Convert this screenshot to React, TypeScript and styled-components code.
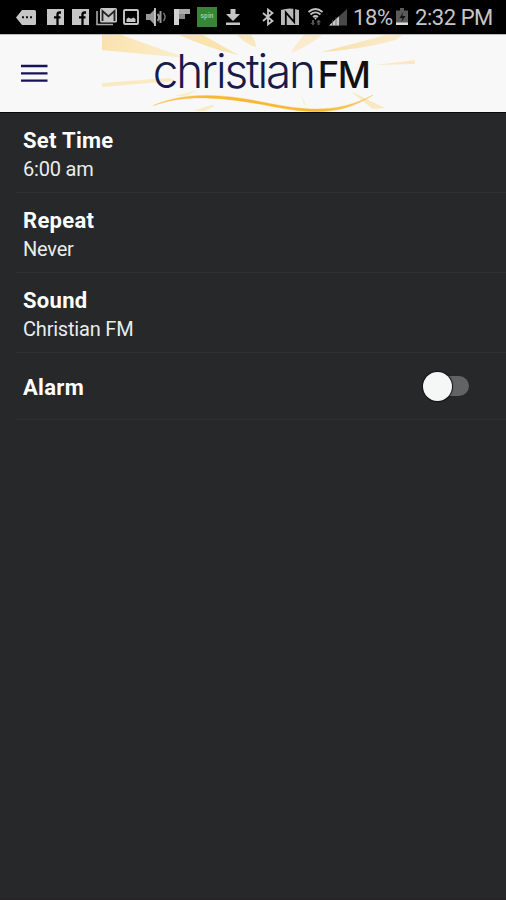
import React from 'react';
import styled, { createGlobalStyle } from 'styled-components';

const GlobalStyle = createGlobalStyle`
  * { box-sizing: border-box; }
  body { margin: 0; background: #262829; font-family: Roboto, "Liberation Sans", sans-serif; }
`;

const Screen = styled.main`
  display: flex;
  flex-direction: column;
  width: 506px;
  height: 900px;
  overflow: hidden;
  background: #262829;
  border-bottom: 2px solid #2a2226;
`;

const StatusBar = styled.div`
  display: flex;
  align-items: center;
  height: 34px;
  flex: none;
  padding-left: 16px;
  background: #000;
  color: #c6c6c6;
`;

const Glyph = styled.svg<{ $w: number; $before?: number }>`
  display: block;
  flex: none;
  width: ${(p) => p.$w}px;
  height: 34px;
  margin-left: ${(p) => p.$before ?? 0}px;
  overflow: visible;
`;

const StatusText = styled.span<{ $w: number; $before: number; $spacing: number }>`
  flex: none;
  width: ${(p) => p.$w}px;
  margin-left: ${(p) => p.$before}px;
  padding-top: 2px;
  font-size: 22px;
  line-height: 32px;
  letter-spacing: ${(p) => p.$spacing}px;
  white-space: nowrap;
`;

const Header = styled.header`
  display: flex;
  height: 79px;
  flex: none;
  background: #f8f8f8;
  border-top: 1px solid #b9b9b9;
  border-bottom: 1px solid #08090a;
`;

const MenuButton = styled.button`
  display: flex;
  align-items: center;
  width: 102px;
  padding: 0 0 0 21px;
  border: 0;
  background: none;
`;

const MenuIcon = styled.svg`
  display: block;
  width: 27px;
  height: 19px;
`;

const Logo = styled.svg`
  display: block;
  width: 320px;
  height: 77px;
`;

const Settings = styled.section`
  margin-left: 15px;
`;

const Row = styled.div<{ $height: number }>`
  display: flex;
  align-items: center;
  justify-content: space-between;
  height: ${(p) => p.$height}px;
  padding: 0 37px 0 8px;
  border-bottom: 1px solid #2f3133;
`;

const Labels = styled.div`
  display: flex;
  flex-direction: column;
  padding-top: 4px;
`;

const Title = styled.div`
  font-size: 22px;
  font-weight: 700;
  line-height: 28px;
  letter-spacing: 0.3px;
  color: #fff;
`;

const AlarmTitle = styled(Title)`
  padding-top: 4px;
`;

const Value = styled.div`
  font-size: 20px;
  line-height: 28px;
  letter-spacing: -0.2px;
  color: #ececec;
`;

const Toggle = styled.button`
  display: flex;
  align-items: center;
  width: 46px;
  height: 30px;
  padding: 0;
  border: 0;
  background: none;
`;

const Thumb = styled.span`
  width: 29px;
  height: 29px;
  flex: none;
  border-radius: 50%;
  background: #f5f6f6;
  box-shadow: 0 0 1px 1px #111213;
  z-index: 1;
`;

const Track = styled.span`
  width: 31px;
  height: 20px;
  margin-left: -14px;
  flex: none;
  border-radius: 10px;
  background: #626364;
`;

const Facebook = ({ before }: { before: number }) => (
  <Glyph $w={17} $before={before} viewBox="0 0 17 34">
    <rect y="9" width="17" height="16" fill="#c6c6c6" />
    <path d="M14 12.5h-1.5q-2 0-2 2V25M7 17.4h6.5" fill="none" stroke="#000" strokeWidth="2.3" />
  </Glyph>
);

const LeftIcons = () => (
  <>
    <Glyph $w={20} viewBox="0 0 20 34">
      <path d="M6 10h12.5q1.5 0 1.5 1.5v12q0 1.5-1.5 1.5H6L0 17.5z" fill="#c6c6c6" />
      <path d="M6 16.2h2v2H6zm4 0h2v2h-2zm4 0h2v2h-2z" fill="#111" />
    </Glyph>
    <Facebook before={11} />
    <Facebook before={8} />
    <Glyph $w={21} $before={7} viewBox="0 0 21 34">
      <path d="M1 11v13.5h16" fill="none" stroke="#aaa" strokeWidth="1.6" />
      <rect x="4" y="8" width="17" height="14.5" rx="1.5" fill="#c6c6c6" />
      <path d="M6.500 21V11l6 5.400 6-5.400v10" fill="none" stroke="#222" strokeWidth="1.8" />
    </Glyph>
    <Glyph $w={16} $before={6} viewBox="0 0 16 34">
      <rect x="1" y="10" width="14" height="14" rx="1" fill="none" stroke="#c6c6c6" strokeWidth="1.9" />
      <path d="M3.500 22v-3l2-1.500 2.500 1.200 2.500-1.200 2 1.500v3z" fill="#c6c6c6" />
    </Glyph>
    <Glyph $w={21} $before={7} viewBox="0 0 21 34">
      <path d="M0 14h4l5-5v16l-5-5H0z" fill="#999" />
      <path d="M9 8v18" stroke="#ccc" strokeWidth="1.8" />
      <path d="M11.500 14q3 3.500 0 7M14.500 11v12" fill="none" stroke="#999" strokeWidth="2" />
      <path d="M17.500 13q3 4 0 8" fill="none" stroke="#777" strokeWidth="1.4" />
    </Glyph>
    <Glyph $w={16} $before={7} viewBox="0 0 16 34">
      <path d="M0 9h5v16H0z" fill="#d2d2d2" />
      <path d="M5 9h11v5H5z" fill="#aaa" />
      <path d="M5 14h6v5H5z" fill="#888" />
    </Glyph>
    <Glyph $w={20} $before={7} viewBox="0 0 20 34">
      <rect y="7" width="20" height="20" fill="#398537" />
      <text x="3.500" y="18" fontFamily="Roboto, sans-serif" fontWeight="700" fontSize="6.5" textLength="13" fill="#9dcc98">spin</text>
    </Glyph>
    <Glyph $w={14} $before={9} viewBox="0 0 14 34">
      <path d="M4.500 9h5v5H14l-7 7-7-7h4.500zM0 22.500h14V25H0z" fill="#c6c6c6" />
    </Glyph>
  </>
);

const RightIcons = () => (
  <>
    <Glyph $w={12} $before={22} viewBox="0 0 12 34">
      <path d="M1 13l9.500 8L6 24.500v-15l4.500 3.500L1 21" fill="none" stroke="#c6c6c6" strokeWidth="1.8" />
    </Glyph>
    <Glyph $w={18} $before={7} viewBox="0 0 18 34">
      <path d="M0 10q9-3 18 0v15q-9 0-18 0z" fill="#b9b9b9" />
      <path d="M4.800 25V12.500l8.400 9.500V9" fill="none" stroke="#000" strokeWidth="1.8" />
    </Glyph>
    <Glyph $w={15} $before={9} viewBox="0 0 15 34">
      <path d="M.5 12q7-6 14 0M2.500 14.500q5-4.300 10 0M5 17q2.500-2 5 0" fill="none" stroke="#c0c0c0" strokeWidth="1.8" />
      <path d="M6 17.500h3l-1.500 2.500z" fill="#ccc" />
      <path d="M4 20v3H2.500l2.500 2.500L7 23H6v-3zM9.500 25v-2.800H8.100l2.500-2.600 2.500 2.600h-1.500V25z" fill="#555" />
    </Glyph>
    <Glyph $w={19} $before={6} viewBox="0 0 19 34">
      <path d="M0 25.500L18 9v16.500z" fill="#484848" />
      <path d="M0 25.500L10 16.300v9.200z" fill="#c8c8c8" />
      <path d="M3.500 20v6M7 17v9" stroke="#555" strokeWidth=".7" />
    </Glyph>
    <StatusText $w={39} $before={5} $spacing={-0.4}>18%</StatusText>
    <Glyph $w={12} $before={4} viewBox="0 0 12 34">
      <path d="M4 8h4v2.500h4V25H0V10.500h4z" fill="#5b5b5b" />
      <path d="M7.400 12L3.500 18h3l-1 4 4-6H6.300z" fill="#111" />
      <path d="M0 22.500h12V25H0z" fill="#ddd" />
    </Glyph>
    <StatusText $w={80} $before={7} $spacing={-0.45}>2:32 PM</StatusText>
  </>
);

const StationLogo = () => (
  <Logo viewBox="102 35 320 77" role="img" aria-label="Christian FM">
    <defs>
      <linearGradient id="rayLeft" x1="0" x2="1">
        <stop offset="0" stopColor="#fae2ad" />
        <stop offset="1" stopColor="#fbefcf" />
      </linearGradient>
      <linearGradient id="rayRight" x1="0" x2="1">
        <stop offset="0" stopColor="#f9e0a8" />
        <stop offset="1" stopColor="#fbecd0" />
      </linearGradient>
      <linearGradient id="swoosh" x1="0" x2="1">
        <stop offset="0" stopColor="#f8cb72" />
        <stop offset=".25" stopColor="#f8b72d" />
        <stop offset=".75" stopColor="#f7b928" />
        <stop offset="1" stopColor="#f5cf7c" />
      </linearGradient>
    </defs>
    <path d="M102 35h20q34 13 66 23-45-4-86-8z" fill="url(#rayLeft)" />
    <path d="M179 35h24q18 10 35 20-30-7-59-20z" fill="#f9e4b0" />
    <path d="M237 35h14q5 6 5 12-9-2-19-12z" fill="#f9e7bd" />
    <path d="M304 35h18q-13 11-31 18 5-10 13-18z" fill="#fbecd0" />
    <path d="M386 35h17l-7 5q-38 10-75 12 32-8 65-17z" fill="url(#rayRight)" />
    <path d="M375 65l40-5v4z" fill="#fbe7c4" />
    <path d="M102 83l66-5q5 1 5 3l-71 6z" fill="#faeac4" />
    <path d="M174 96l24-6-12 6z" fill="#faedc9" />
    <path d="M193 111l18-6 4 1-10 5z" fill="#faebc6" />
    <path d="M301 94l5 11h-2z" fill="#faeed5" />
    <path d="M350 91l35 17-12 1z" fill="#f9e8c2" />
    <path d="M153.500 105.500C188 90 230 95 267 103C311 112 341 112 373 95C338 118 304 113 264 104.800C218 97 186 94 153.500 105.500z" fill="url(#swoosh)" stroke="#f8be48" strokeWidth=".4" />
    <text x="152.800" y="88" fontFamily="Inter, sans-serif" fontWeight="300" fontSize="46.500" letterSpacing="-2.200" textLength="161" lengthAdjust="spacingAndGlyphs" fill="#171b4b">christian</text>
    <text x="317.800" y="87.500" fontFamily="Inter, sans-serif" fontWeight="500" fontSize="36.500" letterSpacing="-1.500" textLength="51.500" lengthAdjust="spacingAndGlyphs" fill="#111">FM</text>
  </Logo>
);

const settings = [
  { title: 'Set Time', value: '6:00 am' },
  { title: 'Repeat', value: 'Never' },
  { title: 'Sound', value: 'Christian FM' },
];

export default function App() {
  return (
    <>
      <GlobalStyle />
      <Screen>
        <StatusBar>
          <LeftIcons />
          <RightIcons />
        </StatusBar>
        <Header>
          <MenuButton aria-label="Menu">
            <MenuIcon viewBox="0 0 27 19">
              <path d="M0 2h26.500M0 9.300h26.500M0 16.600h26.500" stroke="#17135a" strokeWidth="2.3" />
            </MenuIcon>
          </MenuButton>
          <StationLogo />
        </Header>
        <Settings>
          {settings.map((s) => (
            <Row key={s.title} $height={80}>
              <Labels>
                <Title>{s.title}</Title>
                <Value>{s.value}</Value>
              </Labels>
            </Row>
          ))}
          <Row $height={67}>
            <AlarmTitle>Alarm</AlarmTitle>
            <Toggle role="switch" aria-checked={false} aria-label="Alarm">
              <Thumb />
              <Track />
            </Toggle>
          </Row>
        </Settings>
      </Screen>
    </>
  );
}
